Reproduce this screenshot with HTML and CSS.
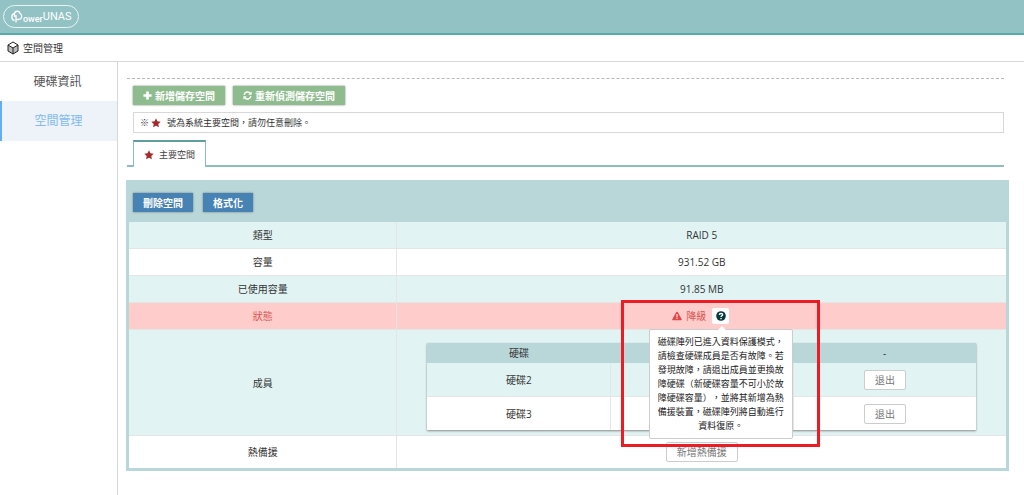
FILE: index.html
```html
<!DOCTYPE html>
<html lang="zh-Hant">
<head>
<meta charset="utf-8">
<meta name="viewport" content="width=device-width, initial-scale=1">
<title>空間管理</title>
<link rel="stylesheet" href="styles.css">
</head>
<body>
<header class="topbar">
  <a class="logo" href="#" aria-label="PowerUNAS">
    <svg class="logo-mark" viewBox="0 0 12 14" aria-hidden="true"><path d="M5 12.500V5M5 9.500H8A3.200 3.200 0 0 0 9 3.500C8.500.5 4 .5 3.500 3.500C0 4 0 10 3.500 10.500M3.500 3.500V7"/></svg>
    <span class="logo-small">ower</span><span class="logo-big">UNAS</span>
  </a>
</header>
<div class="crumb">
  <svg class="cube" viewBox="0 0 12 14" aria-hidden="true"><path class="cube-side" d="M1 4l5 3v6L1 10zM11 4L6 7v6l5-3z"/><path d="M6 1l5 3v6l-5 3-5-3V4zM1 4l5 3 5-3M6 7v6"/></svg>
  <h1>空間管理</h1>
</div>
<div class="layout">
  <nav class="side">
    <a href="#">硬碟資訊</a>
    <a href="#" class="active">空間管理</a>
  </nav>
  <main class="main">
    <div class="actions">
      <button class="btn btn-green" type="button"><svg class="ico" viewBox="0 0 10 10" aria-hidden="true"><path d="M3.500.5h3v3h3v3h-3v3h-3v-3h-3v-3h3z"/></svg>新增儲存空間</button>
      <button class="btn btn-green" type="button"><svg class="ico ico-line" viewBox="0 0 10 10" aria-hidden="true"><path d="M1.200 4.200A3.900 3.900 0 0 1 8 2.400M8.800 5.800A3.900 3.900 0 0 1 2 7.600"/><path class="tip-fill" d="M9.600.5v3.800H5.800zM.4 9.500V5.700h3.800z"/></svg>重新偵測儲存空間</button>
    </div>
    <p class="note">※<svg class="star" viewBox="0 0 10 10" aria-hidden="true"><path d="M5 .3l1.400 3 3.300.4-2.400 2.300.6 3.300L5 7.700 2.100 9.300l.6-3.300L.3 3.700l3.300-.4z"/></svg><span>號為系統主要空間，請勿任意刪除。</span></p>
    <div class="tabs" role="tablist">
      <button class="tab" type="button" role="tab" aria-selected="true"><svg class="star" viewBox="0 0 10 10" aria-hidden="true"><path d="M5 .3l1.400 3 3.300.4-2.400 2.300.6 3.300L5 7.700 2.100 9.300l.6-3.300L.3 3.700l3.300-.4z"/></svg>主要空間</button>
    </div>
    <section class="panel">
      <div class="tools">
        <button class="btn btn-blue" type="button">刪除空間</button>
        <button class="btn btn-blue" type="button">格式化</button>
      </div>
      <table class="info">
        <tr><th scope="row">類型</th><td>RAID 5</td></tr>
        <tr><th scope="row">容量</th><td>931.52 GB</td></tr>
        <tr><th scope="row">已使用容量</th><td>91.85 MB</td></tr>
        <tr class="alert"><th scope="row">狀態</th><td>
          <div class="status">
            <svg class="warn" viewBox="0 0 12 11" aria-hidden="true"><path fill-rule="evenodd" d="M6 .3Q6.500.3 6.800.8L11.700 9.500Q12 10.700 11 10.700H1Q0 10.700.3 9.500L5.200.8Q5.500.3 6 .3zM5 3.500l.3 3.500h1.400L7 3.500zM5.200 7.700v1.500h1.600V7.700z"/></svg>
            <span>降級</span>
            <div class="help-wrap">
              <button class="help" type="button" aria-label="說明" aria-describedby="tip"><svg viewBox="0 0 10 10" aria-hidden="true"><circle cx="5" cy="5" r="4.800"/><path d="M3.300 3.900C3.400 1.900 6.800 2 6.600 3.900C6.500 4.800 5 4.900 5 6.100M5 6.900v1.300"/></svg></button>
              <div class="tip" id="tip" role="tooltip">磁碟陣列已進入資料保護模式，請檢查硬碟成員是否有故障。若發現故障，請退出成員並更換故障硬碟（新硬碟容量不可小於故障硬碟容量），並將其新增為熱備援裝置，磁碟陣列將自動進行資料復原。</div>
              <div class="mark"></div>
            </div>
          </div>
        </td></tr>
        <tr><th scope="row">成員</th><td class="members">
          <table class="disks">
            <thead><tr><th scope="col">硬碟</th><th scope="col"></th><th scope="col">-</th></tr></thead>
            <tbody>
              <tr><td>硬碟2</td><td></td><td><button class="btn btn-white" type="button">退出</button></td></tr>
              <tr><td>硬碟3</td><td></td><td><button class="btn btn-white" type="button">退出</button></td></tr>
            </tbody>
          </table>
        </td></tr>
        <tr class="spare"><th scope="row">熱備援</th><td><button class="btn btn-white" type="button">新增熱備援</button></td></tr>
      </table>
    </section>
  </main>
</div>
</body>
</html>
```
FILE: styles.css
```css
* { box-sizing: border-box; }
body {
  margin: 0;
  min-height: 100vh;
  display: flex;
  flex-direction: column;
  background: #fff;
  color: #333;
  font: 10px/16px "Open Sans", "Noto Sans CJK TC", sans-serif;
}
button { font: inherit; cursor: pointer; }
a { text-decoration: none; }

.topbar { height: 35px; padding: 5px 3px; background: #92c2c4; border-bottom: 2px solid #55acac; }
.logo {
  display: flex;
  align-items: center;
  width: 76px;
  height: 23px;
  padding-left: 7px;
  border: 1px solid #e8f5f5;
  border-radius: 12px;
  color: #fff;
  font-family: Roboto, sans-serif;
}
.logo-mark { flex: none; width: 12px; height: 14px; fill: none; stroke: #fff; stroke-width: 1.3; }
.logo-small { font-size: 9px; font-weight: 500; padding-top: 4px; }
.logo-big { font-size: 11px; padding-top: 1px; }

.crumb { display: flex; align-items: center; gap: 4px; height: 27px; padding-left: 7px; border-bottom: 1px solid #d8d8d8; }
.crumb h1 { margin: 0; font-size: 10px; font-weight: 400; }
.cube { width: 12px; height: 14px; fill: none; stroke: #222; }
.cube .cube-side { fill: #bbb; stroke: none; }

.layout { flex: 1; display: flex; }
.side { flex: 0 0 118px; border-right: 1px solid #d8d8d8; }
.side a { display: block; padding: 0 2px 0 0; line-height: 39px; font-size: 12px; text-align: center; color: #555; }
.side .active { line-height: 40px; border-left: 2px solid #62aef3; background: #edf3f8; color: #82baf0; }

.main { flex: 1; min-width: 0; padding: 16px 15px 24px 8px; }
.actions { display: flex; gap: 8px; margin: 0 5px 7px 1px; padding: 7px 0 0 6px; border-top: 1px dashed #b8b8b8; }
.btn { display: inline-flex; align-items: center; justify-content: center; gap: 3px; height: 19px; padding: 0 10px; border: 0; line-height: 18px; font-size: 10px; }
.btn-green { background: #8fbc8f; color: #fff; font-weight: 700; box-shadow: 0 0 2px #888; }
.btn-blue { background: #4682b4; color: #fff; font-weight: 700; box-shadow: 0 0 2px #777; }
.btn-white { height: 20px; background: #fff; color: #777; border: 1px solid #ccc; border-radius: 2px; }
.ico { width: 9px; height: 9px; fill: #fff; }
.ico-line { fill: none; stroke: #fff; stroke-width: 1.6; }
.ico-line .tip-fill { fill: #fff; stroke: none; }
.star { width: 10px; height: 10px; fill: #a52a2a; }
.note { display: flex; align-items: center; gap: 2px; height: 21px; margin: 0 5px 7px 7px; padding: 0 6px; border: 1px solid #d8d8d8; font-size: 9px; }
.note span { margin-left: 4px; }
.tabs { display: flex; margin: 0 5px 0 1px; padding-left: 6px; border-bottom: 2px solid #8abebf; }
.tab { display: flex; align-items: center; gap: 5px; height: 27px; margin-bottom: -2px; padding: 0 10px; background: #fff; border: 1px solid #8abebf; border-top: 2px solid #5f9ea0; border-bottom: 0; font-size: 9px; color: #444; }

.panel { margin-top: 13px; padding: 0 3px 3px; background: #b9d7d9; }
.tools { display: flex; gap: 10px; padding: 13px 4px 10px; }
table { width: 100%; border-collapse: separate; border-spacing: 0; table-layout: fixed; }
.info th, .info td { padding: 0; height: 27px; font-weight: 400; font-size: 10px; text-align: center; border-bottom: 1px solid #e4e6e6; border-left: 1px solid #e4e6e6; }
.info tr > :first-child { border-left: 0; }
.info > tbody > tr > th { width: 30.500%; }
.info tr { background: #fff; }
.info tr:nth-child(odd) { background: #e1f3f3; }
.info .alert { background: #fcc; }
.info .alert > * { color: #d9534f; }
.info .members { padding: 13px 30px 5px; }
.info .spare > * { height: 32px; border-bottom: 0; }
.spare .btn, .disks .btn { vertical-align: middle; }

.status { display: flex; align-items: center; justify-content: center; gap: 6px; padding-right: 2px; }
.warn { width: 10px; height: 10px; fill: #e04848; margin-right: -2px; }
.help-wrap { position: relative; height: 16px; }
.help { display: grid; place-items: center; width: 17px; height: 16px; padding: 0; border: 0; border-radius: 2px; background: #fff; }
.help svg { width: 10px; height: 10px; fill: #07383b; }
.help path { fill: none; stroke: #fff; stroke-width: 1.4; }
.tip {
  position: absolute;
  z-index: 2;
  top: 21px;
  left: 50%;
  width: 144px;
  margin-left: -72px;
  padding: 5px 7px;
  background: #fff;
  border: 1px solid #ccc;
  border-radius: 2px;
  color: #222;
  font-size: 9px;
  line-height: 14px;
  text-spacing-trim: space-all;
}
.tip::before { content: ""; position: absolute; top: -4px; left: 68px; border: solid transparent; border-width: 0 4px 4px; border-bottom-color: #fff; }
.mark { position: absolute; z-index: 3; top: -8px; left: -91px; width: 199px; height: 147px; border: 3px solid #ed1c24; pointer-events: none; }

.disks { box-shadow: 0 1px 2px #888; }
.info .disks thead th { height: 20px; background: #b9d7d9; border: 0; }
.info .disks tbody tr:first-child { background: #e1f3f3; }
.info .disks tbody tr:last-child { background: #fff; }
.info .disks tbody td { height: 34px; }
.info .disks tbody tr:last-child td { height: 33px; border-bottom: 0; }
```
